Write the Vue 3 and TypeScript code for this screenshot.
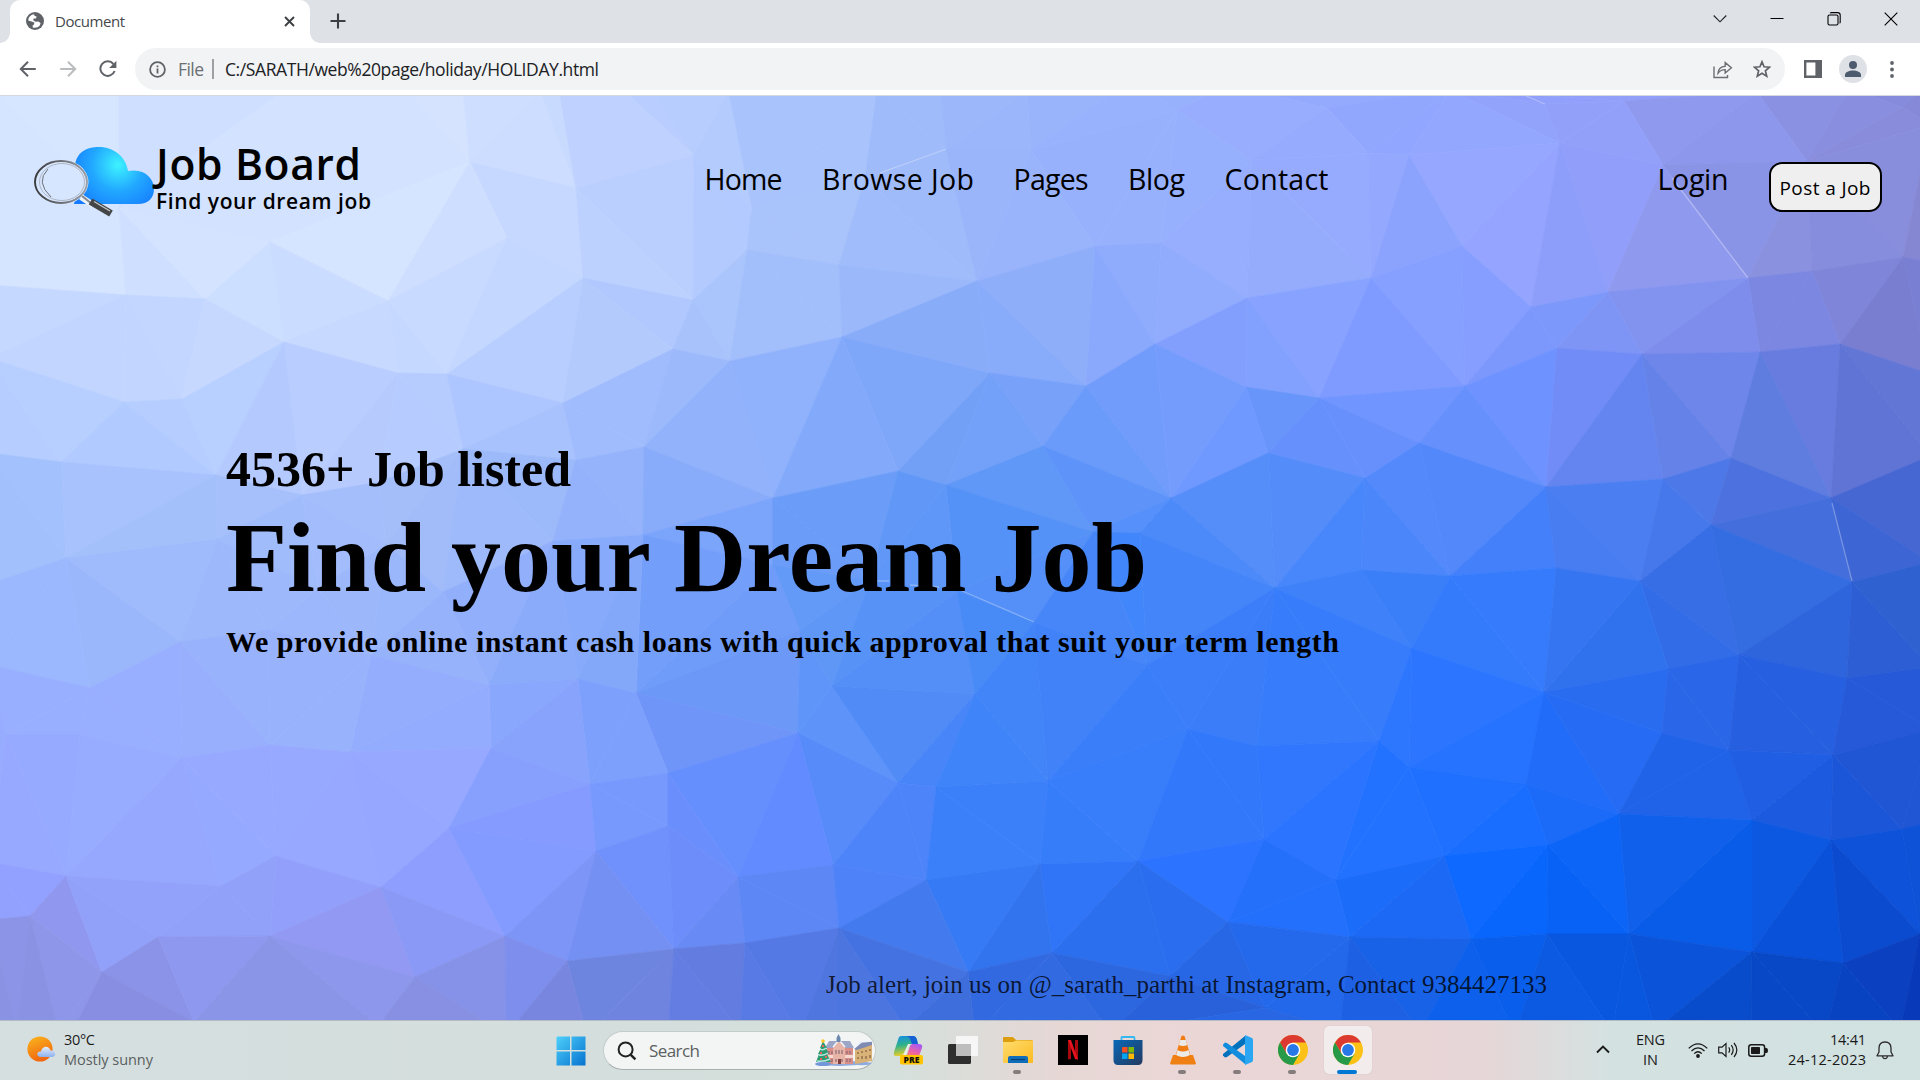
<script setup lang="ts">
import type { Directive } from 'vue'

type Point = [number, number]
type Rgb = [number, number, number]

/* Tracks a line of text so that it spans exactly the given width. */
const vFit: Directive<HTMLElement, number> = {
  mounted(el, { value }) {
    const range = document.createRange()
    range.selectNodeContents(el)
    const natural = range.getBoundingClientRect().width
    const count = (el.textContent ?? '').trim().length
    if (count > 1) el.style.letterSpacing = `${(value - natural) / (count - 1)}px`
    el.style.width = `${value}px`
  },
}

const meshPoints: Point[] = [
  [-12, 70], [1940, 70], [0, 96], [119, 80], [300, 80], [398, 80], [463, 90], [540, 92], [559, 90], [625, 92], [650, 88], [729, 92], [877, 90], [940, 85], [1027, 90], [1130, 80], [1230, 85], [1327, 108],
  [1450, 90], [1545, 104], [1624, 101], [1757, 92], [1850, 88], [1902, 107], [1930, 125], [119, 208], [470, 162], [576, 188], [694, 155], [752, 207], [865, 178], [946, 150],
  [1031, 150], [1177, 110], [1252, 160], [1368, 153], [1409, 155], [1560, 143], [1663, 165], [1807, 161],
  [-10, 285], [126, 295], [205, 299], [270, 242], [388, 301], [507, 238], [583, 278], [693, 300], [747, 250], [839, 265], [977, 281], [1095, 246], [1161, 243],
  [1247, 298], [1371, 278], [1462, 246], [1531, 307], [1608, 292], [1748, 278], [1812, 271], [1903, 257], [1930, 262],
  [-10, 358], [124, 402], [182, 399], [284, 342], [398, 373], [447, 374], [563, 403], [673, 349], [730, 361], [842, 337], [990, 373], [1086, 386], [1155, 344],
  [1246, 387], [1319, 398], [1465, 386], [1557, 348], [1642, 354], [1760, 352], [1840, 344], [1930, 374],
  [-10, 453], [61, 462], [216, 475], [302, 495], [379, 482], [463, 449], [576, 460], [644, 447], [773, 498], [898, 471], [946, 485], [1043, 446], [1171, 498],
  [1268, 453], [1365, 478], [1419, 443], [1546, 487], [1663, 479], [1731, 458], [1831, 498], [1930, 456], [1711, 525],
  [-10, 584], [66, 558], [217, 539], [386, 544], [553, 541], [643, 535], [773, 565], [1093, 532], [1140, 533], [443, 592], [318, 588],
  [180, 642], [90, 688], [-10, 665], [268, 630], [371, 655], [489, 685], [578, 679], [636, 693], [800, 630], [832, 686], [798, 733], [870, 580], [957, 591], [1034, 622],
  [975, 694], [1147, 665], [1275, 588], [1361, 570], [1450, 576], [1556, 568], [1640, 581], [1739, 655], [1852, 582], [1930, 562], [1412, 648], [1544, 692], [1668, 669],
  [1847, 678], [1930, 667], [6, 735], [80, 735], [182, 758], [270, 745], [350, 752], [491, 748], [590, 784], [668, 773], [898, 783], [936, 787], [1048, 781],
  [1188, 729], [1257, 746], [1379, 741], [1409, 767], [1526, 784], [1619, 814], [1662, 733], [1729, 750], [1833, 755], [1930, 729],
  [-10, 862], [66, 876], [221, 886], [276, 856], [381, 887], [449, 828], [596, 851], [668, 826], [738, 877], [833, 865], [926, 880], [1040, 864], [1138, 861],
  [1264, 839], [1335, 880], [1444, 856], [1548, 845], [1752, 820], [1831, 840], [1902, 829], [1930, 822],
  [-10, 920], [30, 916], [102, 972], [158, 937], [270, 936], [415, 977], [505, 936], [567, 961], [674, 949], [745, 943], [839, 928], [968, 972], [1052, 953],
  [1170, 976], [1228, 922], [1350, 937], [1471, 939], [1547, 934], [1629, 934], [1752, 952], [1843, 963], [1920, 934], [1265, 1008],
  [-10, 1030], [17, 1030], [58, 1030], [73, 1030], [194, 1022], [378, 1026], [506, 1035], [587, 1035], [668, 1035], [740, 1030], [800, 1035], [839, 1035], [905, 1028], [975, 1035],
  [1110, 1032], [1340, 1030], [1420, 1032], [1515, 1035], [1612, 1032], [1655, 1030], [1751, 1035], [1825, 1035], [1900, 1030], [1935, 1040],
]

const palette = `
60 150 d7e6ff|300 200 d6e5ff|60 240 d6e5ff|200 260 d4e3ff|440 130 d5e3ff|400 240 d5e4ff|520 130 ccddff|540 220 c6d8ff|610 130 bfd1ff|640 250 bdd1ff|700 110 b6cdfd|715 230 b3caff|800 130 a9c3fc|800 230 a9c3fb|900 120 9fbbfa|900 230 a0bcfa|1000 150 9bb6fa|1040 220 9ab4fc|1150 130 98b2fd|1150 200 98b1fd|1250 110 98adfd|1250 230 97aefd|1330 210 97abfe|1480 170 95a7ff|1500 240 95a4ff|1600 210 929ffa|1600 120 92a0fa|1700 140 8f99ed|1690 240 8f9aee|1790 220 8a92e0|1800 120 8a90e2|1870 180 898edc|1910 180 8686d2
40 330 c5d8ff|100 320 c8daff|150 350 c1d5ff|270 300 cddfff|210 340 c7d8ff|340 330 c8d9ff|430 320 c8daff|500 310 c3d7ff|540 340 b8cefe|620 330 b3cafd|690 320 a8c2fc|780 310 a2befb|720 300 aac5fb|880 290 9ab8fa|910 330 8faff9|960 330 85aaf9|1040 310 8faefa|1120 340 8ba9fc|1190 290 91acfd|1210 340 839ffd|1300 330 87a3ff|1400 350 7f9bff|1420 300 86a0ff|1490 310 859eff|1550 320 7c98fa|1610 320 7f95f5|1700 310 8292ef|1740 330 7c8aea|1790 310 7b87e0|1880 320 797ed1|1850 290 7f86da
30 420 b6ceff|80 390 b8d0ff|120 430 b1caff|220 430 b8d0ff|280 420 b4caff|370 410 bacdff|430 410 b6ccff|420 460 b7caff|500 420 aec6ff|600 420 a1bcfd|560 440 a6c2fb|690 440 92b2fb|782 399 90b1fb|868 394 83a9fa|850 440 83a9fa|940 430 72a0f7|1040 400 78a2fa|1100 440 6b9bfa|1180 420 749cfc|1220 440 7099ff|1260 440 6794f8|1350 430 6690fc|1390 410 7095ff|1510 400 6e92ff|1450 440 6690fc|1590 400 718cf6|1620 450 6485f0|1690 440 6482e8|1700 390 6e85ea|1760 440 5f7cdf|1800 390 687cdf|1867 405 6377d6|1897 442 5a70d0
30 520 a2c0fc|100 510 a7c2fd|180 530 a4c0fb|280 540 a1bcfa|370 520 a4befc|430 500 a0bcf9|520 490 9cb9f9|600 490 94b3fb|620 540 86aafa|690 490 88acf9|700 540 7ba4fb|830 510 6b9df8|800 560 6a9cf8|900 550 5e97f7|1000 540 5592f7|1040 500 6098f8|1110 500 5e94f9|1140 560 4286fb|1210 540 4c8afa|1250 490 568ef9|1350 540 4886fb|1430 520 5389fc|1520 540 4480fa|1600 510 4c7ef0|1640 540 4077ed|1690 500 4d78e8|1770 500 4d72e0|1770 540 426ddc|1870 510 4666d2|1890 550 3d65d4
40 620 9bb7fe|130 630 9bb7fb|200 600 9db9fb|280 590 9db9fb|400 620 9ab7fb|280 690 98b2fc|330 690 98b2fc|60 710 98afff|160 710 98aefe|470 640 94b0fb|430 720 94acfd|540 640 8aaafa|520 710 89a7fc|600 640 84a8f9|620 730 7da0fc|700 600 739efa|720 680 6c99f8|720 740 7095f9|820 620 5f97f7|820 730 5e93fa|880 650 5691f7|900 710 508bf6|990 640 488af6|950 740 4785f8|1000 740 4084f9|1100 650 4484f7|1080 730 3f81f9|1230 610 4083f8|1230 680 3b7df9|1310 600 4082fa|1330 680 367cfb|1390 600 3a7ef8|1490 620 347bfc|1600 610 3575f2|1600 650 3072ee|1680 630 326ce6|1760 600 346ce1|1790 650 2e64dc|1890 590 3061d1|1890 650 2d5ed3
40 800 96aaff|110 810 97abff|200 820 95a9ff|270 780 97a9ff|350 820 96a8ff|420 790 96a8ff|530 770 88a1fd|540 820 859bff|620 800 7799fd|700 820 6a8ffc|730 780 658ffc|770 820 618bff|830 800 568bf9|890 830 4e84f9|980 830 3c80f9|1090 820 367dfa|1130 760 387dfa|1210 800 3278fb|1290 780 3077fd|1320 820 2a74ff|1440 720 2c76ff|1470 760 2673ff|1390 820 2272ff|1490 830 196eff|1570 770 216cf8|1590 700 2a6cf0|1610 740 256bf3|1680 770 2163e8|1700 700 2966e8|1750 780 205fe3|1790 710 265fdf|1800 800 1c5adf|1890 710 2559d7|1890 780 2055d4
30 892 92a0ff|60 930 8f98ee|130 910 92a2fb|180 910 93a2fd|310 900 92a0fb|300 880 93a3fc|240 920 91a0f8|420 900 8d9eff|530 880 839bff|560 910 7e95f8|610 930 7490f3|650 900 7090fc|700 880 6c8dfa|700 920 688af4|780 900 5d87f5|870 900 4d82f8|910 930 437bee|970 920 367af5|1010 930 3274ee|1090 900 3075f8|1130 940 2c6fee|1180 920 2a6dee|1220 880 2c73ff|1290 910 2370fc|1380 900 1c6cfa|1410 920 1b69f5|1480 880 0d69ff|1520 900 0966fc|1580 910 0762f5|1600 860 0d65f8|1680 860 1060ec|1700 910 095ce7|1780 880 0c58e1|1800 920 0a51d9|1860 900 0b4bd0|1880 870 0d52d8
20 990 8a92e3|70 990 8d96e8|130 1000 888fe2|190 980 8e98ef|250 990 8a94e7|360 940 9199f3|400 1010 8990e2|350 990 8d97ec|460 960 8694eb|450 1000 8790e2|530 970 7e8eed|550 1000 7886df|620 1000 6e84df|720 980 627ce0|760 980 567ae4|830 990 4f75df|900 980 4572e1|950 1000 3e6edc|1010 980 3369e0|1100 990 2d67e0|1180 1000 2961da|1250 960 2667e5|1300 950 2469ec|1380 990 1d60e3|1430 960 1862e8|1500 980 095fec|1560 990 0c5ae1|1600 970 0956df|1700 970 0b53d8|1720 1000 084ccb|1790 990 0847c6|1830 1000 0843c1|1890 980 0b41c0|1910 1010 0839b8
`.trim().split(/[|\n]/).map((entry) => {
  const [x, y, hex] = entry.split(' ')
  const value = parseInt(hex, 16)
  return { x: +x, y: +y, rgb: [value >> 16, (value >> 8) & 255, value & 255] as Rgb }
})

function circumcircleHas([a, b, c]: Point[], p: Point): boolean {
  const ax = a[0] - p[0], ay = a[1] - p[1]
  const bx = b[0] - p[0], by = b[1] - p[1]
  const cx = c[0] - p[0], cy = c[1] - p[1]
  const det = (ax * ax + ay * ay) * (bx * cy - cx * by)
    - (bx * bx + by * by) * (ax * cy - cx * ay)
    + (cx * cx + cy * cy) * (ax * by - bx * ay)
  const turn = (b[0] - a[0]) * (c[1] - a[1]) - (c[0] - a[0]) * (b[1] - a[1])
  return turn > 0 ? det > 0 : det < 0
}

function triangulate(points: Point[]): Point[][] {
  const outer: Point[] = [[-20000, -20000], [24000, -20000], [960, 30000]]
  let faces: Point[][] = [outer]
  for (const p of points) {
    const hit = faces.filter((face) => circumcircleHas(face, p))
    const edges = hit.flatMap(([a, b, c]) => [[a, b], [b, c], [c, a]])
    const rim = edges.filter((e, i) => !edges.some((f, j) =>
      i !== j && ((e[0] === f[0] && e[1] === f[1]) || (e[0] === f[1] && e[1] === f[0]))))
    faces = faces.filter((face) => !hit.includes(face)).concat(rim.map(([a, b]) => [a, b, p]))
  }
  return faces.filter((face) => !face.some((p) => outer.includes(p)))
}

function shade(x: number, y: number): string {
  let total = 0
  const sum: Rgb = [0, 0, 0]
  for (const s of palette) {
    const w = 1 / ((x - s.x) ** 2 + (y - s.y) ** 2 + 12) ** 2
    total += w
    sum.forEach((_, i) => { sum[i] += s.rgb[i] * w })
  }
  return `rgb(${sum.map((v) => Math.round(v / total)).join(',')})`
}

const facets = triangulate(meshPoints).map((face) => ({
  points: face.map((p) => p.join(',')).join(' '),
  fill: shade((face[0][0] + face[1][0] + face[2][0]) / 3, (face[0][1] + face[1][1] + face[2][1]) / 3),
}))

const glints = ['M1672 178L1748 278', 'M880 173L946 149', 'M1526 96L1545 104', 'M960 590L1034 622', 'M1832 503L1852 581', 'M876 581H889M910 585L939 587']

const links = [
  { label: 'Home', width: 78 },
  { label: 'Browse Job', width: 152 },
  { label: 'Pages', width: 75 },
  { label: 'Blog', width: 57 },
  { label: 'Contact', width: 104 },
]

const apps = [
  { id: 'copilot', state: '' }, { id: 'tasks', state: '' }, { id: 'files', state: 'open' },
  { id: 'netflix', state: '' }, { id: 'store', state: '' }, { id: 'vlc', state: 'open' },
  { id: 'code', state: 'open' }, { id: 'chrome', state: 'open' }, { id: 'chrome', state: 'active' },
]
</script>

<template>
  <div class="screen">
    <div class="tabstrip">
      <div class="tab">
        <svg class="globe" width="18" height="18" viewBox="0 0 18 18"><circle cx="9" cy="9" r="9" fill="#5f6368" /><path d="M8.2 2.2C5 2.5 2.4 5 2.2 8.4L5.6 9.6 8.4 10.6 8 12.6 6.6 13.4 6.8 15.4C9 16.3 12 15.6 13.8 13.6L14.6 11 12.2 9.6 9.6 9.8 7.2 8.2 7.6 6.6 10 6.4 10.6 4.6 8.4 3.8Z" fill="#fff" /></svg>
        <span v-fit="70" class="tab-title">Document</span>
        <svg class="tab-close" width="11" height="11" viewBox="0 0 11 11"><path d="M1 1L10 10M10 1L1 10" stroke="#3c4043" stroke-width="1.9" /></svg>
      </div>
      <svg class="plus" width="16" height="16" viewBox="0 0 16 16"><path d="M8 .5V15.5M.5 8H15.5" stroke="#3c4043" stroke-width="2.1" /></svg>
      <div class="window-controls">
        <svg width="14" height="14" viewBox="0 0 14 14"><path d="M.7 3.5L7 9.8 13.3 3.5" fill="none" stroke="#222" stroke-width="1.1" /></svg>
        <svg width="14" height="14" viewBox="0 0 14 14"><path d="M.5 6.5H13.5" stroke="#000" stroke-width="1" /></svg>
        <svg width="14" height="14" viewBox="0 0 14 14"><rect x="1" y="3" width="10" height="10" rx="1.5" fill="none" stroke="#000" stroke-width="1.1" /><path d="M3.2 1.2Q3.6.6 4.4.6H10.6Q13.2.6 13.2 3.2V10Q13.2 11 12.6 11.3" fill="none" stroke="#000" stroke-width="1.1" /></svg>
        <svg width="14" height="14" viewBox="0 0 14 14"><path d="M.7.7L13.3 13.3M13.3.7L.7 13.3" stroke="#000" stroke-width="1.1" /></svg>
      </div>
    </div>

    <div class="toolbar">
      <svg class="back" width="18" height="18" viewBox="0 0 18 18"><path d="M16.8 9H2.2M9 1.8L1.8 9 9 16.2" fill="none" stroke="#5f6368" stroke-width="2" /></svg>
      <svg class="forward" width="18" height="18" viewBox="0 0 18 18"><path d="M1.2 9H15.8M9 1.8L16.2 9 9 16.2" fill="none" stroke="#babcbe" stroke-width="2" /></svg>
      <svg class="reload" width="18" height="18" viewBox="0 0 18 18"><path d="M15.6 11A7.3 7.3 0 1 1 14.4 4" fill="none" stroke="#5f6368" stroke-width="2" /><path d="M17.4.8V8H10.2Z" fill="#5f6368" /></svg>
      <div class="omnibox">
        <svg class="info" width="17" height="17" viewBox="0 0 17 17"><circle cx="8.5" cy="8.5" r="7.4" fill="none" stroke="#5f6368" stroke-width="1.8" /><path d="M8.5 7.6V12.6M8.5 4.4V6.2" stroke="#5f6368" stroke-width="1.8" /></svg>
        <span v-fit="26" class="scheme">File</span>
        <span class="rule" />
        <span v-fit="374" class="url">C:/SARATH/web%20page/holiday/HOLIDAY.html</span>
        <svg class="share" width="20" height="19" viewBox="0 0 20 19"><path d="M1 6.5V17.5H14.5V15M5 13.2Q5.6 6.8 12.2 6.2V2.6L18.4 7.8 12.2 13V9.6Q7.8 9.6 5 13.2Z" fill="none" stroke="#6b6f73" stroke-width="1.4" /></svg>
        <svg class="star" width="18" height="18" viewBox="0 0 18 18"><path d="M9 1.8L11.1 6.8 16.5 7.2 12.4 10.8 13.7 16.1 9 13.2 4.3 16.1 5.6 10.8 1.5 7.2 6.9 6.8Z" fill="none" stroke="#5f6368" stroke-width="1.7" /></svg>
      </div>
      <svg class="panel" width="18" height="18" viewBox="0 0 18 18"><path d="M0 0H18V18H0ZM2.4 2.6V15.4H11.4V2.6Z" fill="#5f6368" fill-rule="evenodd" /></svg>
      <svg class="profile" width="28" height="28" viewBox="0 0 28 28"><circle cx="14" cy="14" r="14" fill="#dee1e6" /><circle cx="14" cy="10" r="4" fill="#4d5b6e" /><path d="M6 22V20C6 17 10 15.4 14 15.4S22 17 22 20V22Z" fill="#4d5b6e" /></svg>
      <svg class="menu" width="4" height="17" viewBox="0 0 4 17"><circle cx="2" cy="2" r="1.9" fill="#5f6368" /><circle cx="2" cy="8.5" r="1.9" fill="#5f6368" /><circle cx="2" cy="15" r="1.9" fill="#5f6368" /></svg>
    </div>

    <main class="page">
      <svg class="backdrop" width="1920" height="924" viewBox="0 96 1920 924">
        <polygon v-for="(f, i) in facets" :key="i" :points="f.points" :fill="f.fill" :stroke="f.fill" stroke-width=".7" />
        <path v-for="d in glints" :key="d" :d="d" stroke="#fff" stroke-opacity=".28" stroke-width="1.3" />
      </svg>

      <header class="masthead">
        <svg class="logo" width="123" height="74" viewBox="0 0 123 74">
          <defs>
            <radialGradient id="sky" gradientUnits="userSpaceOnUse" cx="84" cy="21" r="52"><stop offset="0" stop-color="#3df3ff" /><stop offset=".5" stop-color="#22a8ff" /><stop offset="1" stop-color="#147aff" /></radialGradient>
            <linearGradient id="rim" x1="0" x2="1"><stop offset="0" stop-color="#3a3a3c" /><stop offset="1" stop-color="#9aa0a8" /></linearGradient>
          </defs>
          <path d="M40 60C43 52 40 41 41 22 42 8 53 3 65 3 80 3 92 13 94 27 110 24 120 34 120 45 120 54 114 60 104 60Z" fill="url(#sky)" />
          <ellipse cx="27" cy="38" rx="27.5" ry="22.5" fill="#d7e6ff" />
          <ellipse cx="27" cy="38" rx="26" ry="21" fill="none" stroke="url(#rim)" stroke-width="1.9" />
          <ellipse cx="28" cy="38" rx="22.5" ry="18.5" fill="none" stroke="#a3a9b2" stroke-width=".8" />
          <path d="M14 25Q1 38 17 53" fill="none" stroke="#6a7078" stroke-width="1" />
          <path d="M47 53L59 61" stroke="#eef3f8" stroke-width="6" /><path d="M48 52L58 60" stroke="#858a90" stroke-width="2.2" />
          <path d="M56.5 57.5L77 69.5" stroke="#444547" stroke-width="7" /><path d="M60 57.5L76 67" stroke="#c6c9cc" stroke-width="1.3" />
        </svg>
        <div class="brand">
          <h1 v-fit="205" class="name">Job Board</h1>
          <p v-fit="215" class="tagline">Find your dream job</p>
        </div>
        <nav class="links">
          <a v-for="link in links" :key="link.label" v-fit="link.width">{{ link.label }}</a>
        </nav>
        <a v-fit="71" class="login">Login</a>
        <button class="post"><span v-fit="91">Post a Job</span></button>
      </header>

      <section class="hero">
        <h3 v-fit="345">4536+ Job listed</h3>
        <h2 v-fit="921">Find your Dream Job</h2>
        <h4 v-fit="1113">We provide online instant cash loans with quick approval that suit your term length</h4>
      </section>

      <p v-fit="721" class="alert">Job alert, join us on @_sarath_parthi at Instagram, Contact 9384427133</p>
    </main>

    <footer class="taskbar">
      <div class="weather">
        <svg width="29" height="28" viewBox="0 0 29 28">
          <defs><linearGradient id="sun" x1=".2" y1="0" x2=".6" y2="1"><stop offset="0" stop-color="#f9b21d" /><stop offset="1" stop-color="#f0620f" /></linearGradient><linearGradient id="puff" x1="0" y1="0" x2="0" y2="1"><stop offset="0" stop-color="#e3ecfc" /><stop offset="1" stop-color="#8fb2ee" /></linearGradient></defs>
          <circle cx="13" cy="13" r="12.6" fill="url(#sun)" />
          <path d="M14 21C9 21 9 15 14 15.4 15 10 22 9 23.5 14.5 29.5 14 29.5 21 25 21Z" fill="url(#puff)" />
        </svg>
        <div class="weather-text"><span v-fit="31" class="degrees">30°C</span><span v-fit="89" class="sky">Mostly sunny</span></div>
      </div>

      <div class="dock">
        <svg class="start" width="30" height="30" viewBox="0 0 30 30"><defs><linearGradient id="win" x1="0" y1="0" x2="1" y2="1"><stop offset="0" stop-color="#4dd0fb" /><stop offset="1" stop-color="#0672cf" /></linearGradient></defs><path d="M1.5.5H14V14H.5V1.5ZM15.5.5H29.5V14H15.5ZM.5 15.5H14V29.5H.5ZM15.5 15.5H29.5V29.5H15.5Z" fill="url(#win)" /></svg>
        <div class="search">
          <svg class="lens" width="20" height="20" viewBox="0 0 20 20"><circle cx="8.6" cy="8.4" r="7" fill="none" stroke="#222" stroke-width="2" /><path d="M13.6 13.6L18.4 18.4" stroke="#222" stroke-width="2.4" /></svg>
          <span v-fit="51">Search</span>
          <svg class="town" width="58" height="33" viewBox="0 0 58 33">
            <path d="M1 31Q4 27 14 28L45 27 57 29Q54 32 43 31L25 32Z" fill="#8faadd" />
            <path d="M12 12H38V30H12Z" fill="#d98f88" /><path d="M12 21H38V24H12Z" fill="#f3d9cf" /><path d="M10 14L14 7H35L39 14Z" fill="#9da6c6" /><path d="M18 13L24 5 30 13V30H18Z" fill="#e7b5a8" /><path d="M18 13L24 6 30 13" fill="none" stroke="#eef3fc" stroke-width="1.5" />
            <path d="M21.5 8V4L23.5 0 25.5 4V8Z" fill="#6b87ad" /><path d="M14 17V20M17 17V20M32 17V20M35 17V20M21 16V20M24 16V20M27 16V20M14 25V28M17 25V28M32 25V28M35 25V28M21 25V28M27 25V28" stroke="#8a6a78" stroke-width="1.2" />
            <path d="M23 25H26V30H23Z" fill="#803f3c" />
            <path d="M40 14L57 9V27L40 30Z" fill="#d8b277" /><path d="M39 15L45 8 57 7V11L42 16Z" fill="#7f8bb0" /><path d="M39 14L46 8 57 7" stroke="#eef4ff" stroke-width="1.7" fill="none" /><path d="M43 18V20M47 17V19M51 16V18M55 15V17M43 23V25M47 22V25M51 22V25M55 21V24" stroke="#8f6c4c" stroke-width="1.4" />
            <path d="M8 7L12 14 11 14 14 20 12 20 16 28H1L4 20 3 20 6 14 5 14Z" fill="#2c9b72" /><path d="M5 15Q8 17 11 14M4 21Q9 22 13 19M2 27Q9 28 15 25" stroke="#b8e8e1" stroke-width="1.5" fill="none" /><circle cx="8" cy="7" r="1.8" fill="#ffc629" /><path d="M7 12H9M5 19H7M10 23H12M5 25H7" stroke="#ec625c" stroke-width="2" /><ellipse cx="8" cy="30" rx="8" ry="2" fill="#7396da" />
          </svg>
        </div>
        <div v-for="(app, i) in apps" :key="i" class="app" :class="app.state">
          <div class="tile">
            <svg v-if="app.id === 'copilot'" width="30" height="30" viewBox="0 0 30 30">
              <defs><linearGradient id="cpA" x1="0" y1="0" x2=".2" y2="1"><stop offset="0" stop-color="#1389e8" /><stop offset=".5" stop-color="#2fb28a" /><stop offset="1" stop-color="#e8cd2a" /></linearGradient><linearGradient id="cpB" x1=".7" y1="0" x2=".2" y2="1"><stop offset="0" stop-color="#a75af0" /><stop offset=".5" stop-color="#ee62a4" /><stop offset="1" stop-color="#ff9650" /></linearGradient></defs>
              <path d="M6 2Q7 1 9 1H20Q23 1 24 5L25 9H20Q17 9 16 12L13 19Q12 21 9 21H3Q0 21 1 17Z" fill="url(#cpA)" /><path d="M12 1H20Q23 1 24 5L25 9H19L17 4Q16 1 12 1Z" fill="#1560d4" />
              <path d="M19 9H26Q30 9 29 13L26 21Q25 24 21 24H10Q13 24 14 20L17 11Q17.5 9 19 9Z" fill="url(#cpB)" /><path d="M15 9H19Q17 9 16 12L13 20H10Z" fill="#e7eeea" />
              <rect x="7" y="20" width="23" height="9.5" rx="2" fill="#ffc400" /><text x="18.5" y="28" text-anchor="middle" class="pre">PRE</text>
            </svg>
            <svg v-else-if="app.id === 'tasks'" width="30" height="30" viewBox="0 0 30 30"><defs><linearGradient id="glass" x1="0" y1="1" x2="1" y2="0"><stop offset="0" stop-color="#a6a6a6" /><stop offset=".6" stop-color="#f1f1f1" /><stop offset="1" stop-color="#fff" /></linearGradient></defs><rect x="0" y="9" width="23" height="20" rx="1.5" fill="#2e2e2e" /><rect x="8" y="1" width="22" height="20" rx="1" fill="#f6f6f6" /><rect x="8" y="9" width="15" height="12" fill="#bdbdbd" /></svg>
            <svg v-else-if="app.id === 'files'" width="30" height="28" viewBox="0 0 30 28"><defs><linearGradient id="fold" x1="0" y1="0" x2="1" y2="1"><stop offset="0" stop-color="#ffdc6e" /><stop offset="1" stop-color="#fbbb22" /></linearGradient></defs><path d="M0 2Q0 1 1 1H9Q10 1 11 2L13 4H29Q30 4 30 6V12H0Z" fill="#dd9d10" /><path d="M0 6H10L13 4.5H30V27H1Q0 27 0 26Z" fill="url(#fold)" /><path d="M5 27V22Q5 20 7 20H23Q25 20 25 22V27Z" fill="#0f6dba" /><path d="M8 23.5H22" stroke="#083f76" stroke-width="1.2" /></svg>
            <svg v-else-if="app.id === 'netflix'" width="30" height="30" viewBox="0 0 30 30"><rect width="30" height="30" fill="#000" /><path d="M10 5H13V24L10 24.5ZM17 5H20V24.5L17 24Z" fill="#a9080e" /><path d="M10 5H13L20 24.5 17 24Z" fill="#e5131d" /></svg>
            <svg v-else-if="app.id === 'store'" width="30" height="30" viewBox="0 0 30 30"><defs><linearGradient id="bag" x1="0" y1="0" x2="1" y2="1"><stop offset="0" stop-color="#0769b8" /><stop offset="1" stop-color="#24395f" /></linearGradient></defs><path d="M8.5 6V2.5Q8.5 2 9.5 2H20.5Q21.5 2 21.5 3V6" fill="none" stroke="#35b7ef" stroke-width="1.8" /><path d="M.5 5H29.5V25Q29.5 30 25 30H5Q.5 30 .5 25Z" fill="url(#bag)" /><path d="M9 12H14.5V17.5H9Z" fill="#f25022" /><path d="M15.5 12H21V17.5H15.5Z" fill="#7fba00" /><path d="M9 18.5H14.5V24H9Z" fill="#00a4ef" /><path d="M15.5 18.5H21V24H15.5Z" fill="#ffb900" /></svg>
            <svg v-else-if="app.id === 'vlc'" width="26" height="30" viewBox="0 0 26 30"><path d="M3 20H23L26 28.5 25 29.5H1L0 28.5Z" fill="#ef8114" /><path d="M11.5 1Q13 0 14.5 1L21 22Q19 25 13 25T5 22Z" fill="#ef7d13" /><path d="M10.3 5H15.7L17.2 10Q13 12 8.8 10ZM7.5 15Q13 18 18.5 15L20 20Q13 24 6 20Z" fill="#eceae7" /></svg>
            <svg v-else-if="app.id === 'code'" width="30" height="30" viewBox="0 0 30 30"><path d="M22 1V9L4 22 2 22.5 0 20.5V19Z" fill="#0072bd" /><path d="M22 29V21L4 8 2 7.5 0 9.5V11Z" fill="#128dde" /><path d="M22 0L29 3Q30 4 30 5V25Q30 26 29 27L22 30Z" fill="#2aa6f2" /></svg>
            <svg v-else width="30" height="30" viewBox="0 0 30 30"><circle cx="15" cy="15" r="15" fill="#fbc116" /><path d="M2 7.500A15 15 0 0 1 28 7.500H15L8.500 18.800Z" fill="#dc3a30" /><path d="M2 7.500A15 15 0 0 0 15 30L21.500 18.800H8.500Z" fill="#269a48" /><circle cx="15" cy="15" r="7.3" fill="#fff" /><circle cx="15" cy="15" r="5.9" fill="#2878e8" /></svg>
          </div>
          <span class="pip" />
        </div>
      </div>

      <div class="tray">
        <svg class="more" width="14" height="9" viewBox="0 0 14 9"><path d="M1 7.5L7 1.5 13 7.5" fill="none" stroke="#1a1a1a" stroke-width="1.9" /></svg>
        <div class="lang"><span v-fit="29">ENG</span><span v-fit="15">IN</span></div>
        <svg class="wifi" width="20" height="15" viewBox="0 0 20 15"><g fill="none" stroke="#1a1a1a" stroke-width="1.3"><path d="M.7 5.4Q10-3.6 19.3 5.4M3.500 8Q10 1.8 16.5 8M6.2 10.6Q10 7 13.8 10.6" /></g><circle cx="10" cy="13" r="1.9" fill="#1a1a1a" /></svg>
        <svg class="volume" width="20" height="16" viewBox="0 0 20 16"><g fill="none" stroke="#1a1a1a" stroke-width="1.2"><path d="M.7 5.2H4L8 1.5V14.5L4 10.8H.7ZM10.7 5.4Q12.6 8 10.7 10.6M13.3 3.2Q17 8 13.3 12.8M16 1Q21.7 8 16 15" /></g></svg>
        <svg class="battery" width="20" height="13" viewBox="0 0 20 13"><rect x=".8" y=".8" width="15.8" height="11.4" rx="2.5" fill="none" stroke="#1a1a1a" stroke-width="1.5" /><rect x="3" y="3" width="9" height="7" rx=".8" fill="#1a1a1a" /><path d="M17 4H18.5Q20 4 20 6.5T18.5 9H17Z" fill="#1a1a1a" /></svg>
        <div class="clock"><span v-fit="36">14:41</span><span v-fit="78">24-12-2023</span></div>
        <svg class="bell" width="18" height="19" viewBox="0 0 18 19"><path d="M1 14.8L3 11V7Q3.2 1 9 1T15 7V11L17 14.8ZM6.5 15Q7 17.7 9 17.7T11.5 15" fill="none" stroke="#2b2b2b" stroke-width="1.3" stroke-linejoin="round" /></svg>
      </div>
    </footer>
  </div>
</template>

<style>
body { margin: 0; background: #fff; overflow: hidden; }
</style>

<style scoped>
* { box-sizing: border-box; }
.screen { width: 1920px; height: 1080px; display: flex; flex-direction: column; overflow: hidden; font-family: "Open Sans", "Noto Sans", sans-serif; white-space: nowrap; }
.screen svg { display: block; flex: none; }
h1, h2, h3, h4, p { margin: 0; }

.tabstrip { height: 43px; flex: none; display: flex; background: #dee1e6; }
.tab { position: relative; width: 300px; height: 43px; margin-left: 10px; display: flex; align-items: flex-start; background: #fff; border-radius: 10px 10px 0 0; }
.tab::before, .tab::after { content: ""; position: absolute; bottom: 0; width: 10px; height: 10px; }
.tab::before { left: -10px; background: radial-gradient(circle at 0 0, transparent 9.5px, #fff 10px); }
.tab::after { right: -10px; background: radial-gradient(circle at 100% 0, transparent 9.5px, #fff 10px); }
.globe { margin: 12px 0 0 16px; }
.tab-title { margin-left: 11px; margin-top: 9px; font-size: 15px; line-height: 24px; color: #45484c; }
.tab-close { margin: 16px 15px 0 auto; }
.plus { margin: 13px 0 0 20px; }
.window-controls { margin: 12px 22px 0 auto; display: flex; gap: 43px; }

.toolbar { height: 53px; flex: none; display: flex; align-items: flex-start; background: #fff; border-bottom: 1px solid #d5d8dc; }
.back { margin: 17px 0 0 19px; }
.forward { margin: 17px 0 0 22px; }
.reload { margin: 17px 0 0 22px; }
.omnibox { width: 1650px; height: 42px; margin: 5px 0 0 18px; display: flex; align-items: center; background: #f1f3f4; border-radius: 21px; }
.info { margin-left: 14px; }
.scheme { margin-left: 12px; font-size: 17.5px; line-height: 24px; color: #6b6f73; }
.rule { width: 2px; height: 20px; margin-left: 8px; background: #9da1a5; }
.url { margin-left: 11px; font-size: 17.5px; line-height: 24px; color: #202124; }
.share { margin-left: auto; }
.star { margin: 0 14px 0 20px; }
.panel { margin: 17px 0 0 19px; }
.profile { margin: 12px 0 0 17px; }
.menu { margin: 18px 0 0 23px; }

.page { position: relative; height: 924px; flex: none; overflow: hidden; display: flex; flex-direction: column; align-items: flex-start; }
.backdrop { position: absolute; inset: 0; z-index: 0; }
.masthead, .hero, .alert { position: relative; z-index: 1; color: #000; }
.masthead { width: 1920px; height: 343px; display: flex; align-items: flex-start; }
.logo { margin: 48px -1px 0 34px; }
.brand { width: 215px; margin-top: 43px; display: flex; flex-direction: column; }
.name { font-size: 42.5px; font-weight: 600; line-height: 50px; }
.tagline { font-size: 21px; font-weight: 600; line-height: 25px; }
.links { display: flex; gap: 39.5px; margin: 65px 0 0 333.5px; font-size: 28.5px; line-height: 36px; }
.login { margin: 65px 0 0 329px; font-size: 28.5px; line-height: 36px; }
.post { width: 113px; height: 50px; margin: 66px 0 0 40px; padding: 2px 0 0; display: flex; align-items: center; justify-content: center; font: 19px/26px "Open Sans", sans-serif; color: #000; background: #efefef; border: 2px solid #000; border-radius: 13px; }
.post span { text-align: left; }

.hero { margin-left: 226px; font-family: "Liberation Serif", serif; }
.hero h3 { font-size: 50px; line-height: 60px; }
.hero h2 { margin-top: 9px; font-size: 100px; line-height: 100px; }
.hero h4 { margin-top: 16px; font-size: 30px; line-height: 36px; }
.alert { margin: 310px 0 0 826px; font-family: "Liberation Serif", serif; font-size: 25px; line-height: 30px; color: rgba(0, 0, 0, .78); }

.taskbar { height: 60px; flex: none; display: grid; grid-template-columns: 556px 820px 1fr; border-top: 1px solid #b3bbc4; background: linear-gradient(90deg, #d6dfe0 0, #d4dedc 600px, #d5e0dc 900px, #e6d7d5 1060px, #ebd6d6 1200px, #e7d6d7 1480px, #d4e1e1 1610px, #d1e2e1 1920px); }
.weather { display: flex; align-items: flex-start; padding-left: 27px; }
.weather svg { margin-top: 15px; }
.weather-text { display: flex; flex-direction: column; margin: 9px 0 0 8px; font-size: 14.5px; line-height: 20px; }
.degrees { color: #1b1b1b; }
.sky { color: #5a5e60; }
.dock { display: flex; align-items: flex-start; }
.start { margin-top: 15px; }
.search { width: 273px; height: 39px; margin: 10px 4px 0 17px; display: flex; align-items: center; background: #f3f5f5; border: 1px solid #c3cbcb; border-bottom-color: #a7afaf; border-radius: 20px; font-size: 17px; line-height: 24px; color: #5c5f60; }
.lens { margin-left: 13px; }
.search span { margin-left: 12px; }
.town { margin-left: auto; margin-right: 2px; }
.app { position: relative; width: 55px; height: 59px; display: flex; justify-content: center; }
.tile { width: 48px; height: 48px; margin-top: 5px; border-radius: 5px; display: flex; align-items: center; justify-content: center; }
.active .tile { background: #f2ecec; box-shadow: 0 0 1px #b9b1b1; }
.pip { display: none; position: absolute; top: 49px; left: 23px; width: 8px; height: 4px; border-radius: 2px; background: #857d7d; }
.open .pip { display: block; }
.active .pip { display: block; left: 17px; width: 20px; background: #0078d4; }
.pre { font: 800 8.5px "Open Sans", sans-serif; fill: #16130a; }
.tray { display: flex; align-items: flex-start; font-size: 14.5px; line-height: 20px; color: #1a1a1a; }
.more { margin: 24px 0 0 220px; }
.lang { width: 31px; margin: 9px 0 0 25px; display: flex; flex-direction: column; align-items: center; }
.wifi { margin: 22px 0 0 22px; }
.volume { margin: 21px 0 0 10px; }
.battery { margin: 23px 0 0 10px; }
.clock { width: 79px; margin: 9px 0 0 19px; display: flex; flex-direction: column; align-items: flex-end; }
.bell { margin: 20px 0 0 10px; }
</style>
